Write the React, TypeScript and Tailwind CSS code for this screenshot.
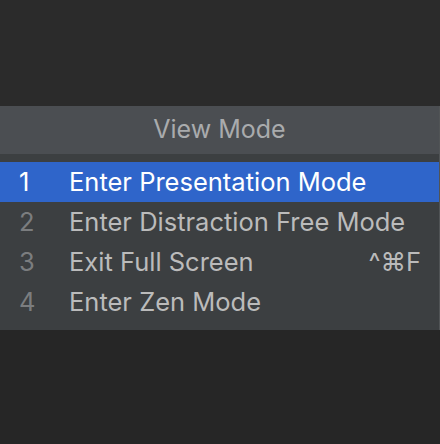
import React from 'react';

const items = [
  { key: '1', label: 'Enter Presentation Mode', shortcut: '' },
  { key: '2', label: 'Enter Distraction Free Mode', shortcut: '' },
  { key: '3', label: 'Exit Full Screen', shortcut: '^⌘F' },
  { key: '4', label: 'Enter Zen Mode', shortcut: '' },
];

export default function App() {
  const selected = 0;

  return (
    <div className="w-[440px] h-[444px] bg-[#2b2b2b] flex flex-col font-['Inter',sans-serif] overflow-hidden">
      <div className="h-[106px] shrink-0" />
      <div className="bg-[#3c3f41] flex flex-col pb-2 border-r border-[#515456]">
        <div className="h-12 bg-[#4b4e52] flex items-center justify-center text-[25px] text-[#a9abad]">
          View Mode
        </div>
        <div className="h-2" />
        {items.map((item, i) => (
          <div
            key={item.key}
            className={`h-10 flex items-center pr-[18px] text-[25.5px] ${
              i === selected ? 'bg-[#2f65ca] text-white' : 'text-[#bbbbbb]'
            }`}
          >
            <span className={`w-[69px] pl-[19px] ${i === selected ? 'text-white' : 'text-[#7b7d7f]'}`}>
              {item.key}
            </span>
            <span className="flex-1">{item.label}</span>
            {item.shortcut && <span>{item.shortcut}</span>}
          </div>
        ))}
      </div>
      <div className="flex-1 bg-[#262626]" />
    </div>
  );
}
